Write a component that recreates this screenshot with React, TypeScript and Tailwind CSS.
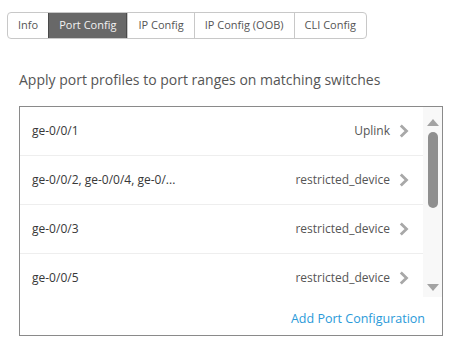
import React from 'react';

const tabs = ['Info', 'Port Config', 'IP Config', 'IP Config (OOB)', 'CLI Config'];

const rows = [
  { ports: 'ge-0/0/1', profile: 'Uplink' },
  { ports: 'ge-0/0/2, ge-0/0/4, ge-0/...', profile: 'restricted_device' },
  { ports: 'ge-0/0/3', profile: 'restricted_device' },
  { ports: 'ge-0/0/5', profile: 'restricted_device' },
];

const Chevron = () => (
  <svg width="10" height="14" viewBox="0 0 10 14" className="shrink-0">
    <path d="M1.8 1.5 L7.5 7 L1.8 12.5" fill="none" stroke="#a8a8a8" strokeWidth="2.8" />
  </svg>
);

const App = () => {
  return (
    <div className="h-[348px] w-[463px] bg-white font-['Open_Sans',sans-serif] text-[#555]">
      <div className="pl-[7px] pt-[11px]">
        <div className="inline-flex h-[27px] overflow-hidden rounded-[4px] border border-[#c8c8c8] text-[11px]">
          {tabs.map((t, i) => (
            <div
              key={t}
              className={
                i === 1
                  ? 'flex items-center border-x border-[#4a4a4a] bg-[#686868] px-[10px] text-[#f2f2f2]'
                  : i === 0
                    ? 'flex items-center px-[10px] text-[#555]'
                    : 'flex items-center border-l border-[#c8c8c8] px-[10px] text-[#555]'
              }
            >
              {t}
            </div>
          ))}
        </div>
      </div>

      <div className="px-[19px]">
        <p className="mt-[31px] text-[14px] leading-[20px] text-[#555]">
          Apply port profiles to port ranges on matching switches
        </p>

        <div className="mt-[16px] h-[230px] w-[424px] border border-[#8a8a8a]">
          <div className="flex h-[190px]">
            <div className="flex-1 overflow-hidden">
              {rows.map((r) => (
                <div
                  key={r.ports}
                  className="flex h-[49px] items-center justify-between border-b border-[#eeeeee] pl-[12px] pr-[14px] text-[12px] text-[#383838]"
                >
                  <span>{r.ports}</span>
                  <span className="flex items-center gap-[9px] text-[#555]">
                    {r.profile}
                    <Chevron />
                  </span>
                </div>
              ))}
            </div>
            <div className="flex w-[19px] flex-col items-center bg-[#f8f8f8] pt-[12px] pb-[6px]">
              <svg width="12" height="7" viewBox="0 0 12 7">
                <path d="M6 0 L12 7 L0 7 Z" fill="#a3a3a3" />
              </svg>
              <div className="mt-[6px] h-[76px] w-[10px] rounded-full bg-[#8f8f8f]" />
              <div className="flex-1" />
              <svg width="12" height="7" viewBox="0 0 12 7">
                <path d="M0 0 L12 0 L6 7 Z" fill="#a3a3a3" />
              </svg>
            </div>
          </div>
          <div className="flex justify-end pt-[13px] pr-[17px] text-[12.5px] leading-[18px] text-[#2a9ad9]">
            Add Port Configuration
          </div>
        </div>
      </div>
    </div>
  );
};

export default App;
